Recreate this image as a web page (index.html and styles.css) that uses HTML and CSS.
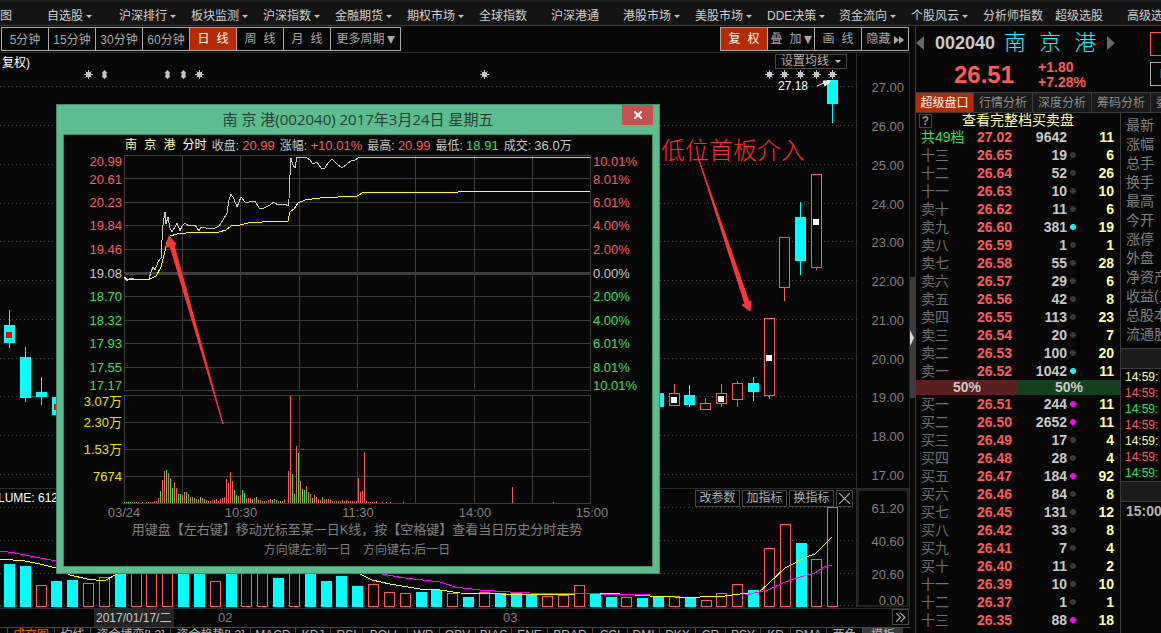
FILE: index.html
```html
<!DOCTYPE html>
<html lang="zh-CN">
<head>
<meta charset="utf-8">
<title>南京港 002040</title>
<link rel="stylesheet" href="styles.css">
</head>
<body>
<nav class="menu">
  <a href="#" class="first">图</a><a href="#" class="drop">自选股</a><a href="#" class="drop">沪深排行</a><a href="#" class="drop">板块监测</a><a href="#" class="drop">沪深指数</a><a href="#" class="drop">金融期货</a><a href="#" class="drop">期权市场</a><a href="#">全球指数</a><a href="#">沪深港通</a><a href="#" class="drop">港股市场</a><a href="#" class="drop">美股市场</a><a href="#" class="drop">DDE决策</a><a href="#" class="drop">资金流向</a><a href="#" class="drop">个股风云</a><a href="#">分析师指数</a><a href="#">超级选股</a><a href="#">高级选股</a>
</nav>
<div class="work">
  <main class="left">
    <div class="toolbar">
      <div class="group">
        <button>5分钟</button><button>15分钟</button><button>30分钟</button><button>60分钟</button><button class="on">日 线</button><button>周 线</button><button>月 线</button><button class="wide">更多周期<svg class="tri" viewBox="0 0 8 8"><path d="M0 0h8L4 8z"/></svg></button>
      </div>
      <div class="group">
        <button class="on">复 权</button><button>叠 加<svg class="tri" viewBox="0 0 8 8"><path d="M0 0h8L4 8z"/></svg></button><button>画 线</button><button>隐藏<svg class="fwd" viewBox="0 0 10 8"><path d="M0 0l5 4-5 4zM5 0l5 4-5 4z"/></svg></button>
      </div>
    </div>
    <div class="chart">
      <svg id="kline" class="plot" viewBox="0 52 910 557">
        <path class="frame" d="M0 52.5H910M856.5 52V607M0 488.5H910M909.5 52V609M0 608.5H910"/>
        <path class="frame thick" d="M857 490H908V606H858V490"/>
        <g id="kgrid"></g>
        <g id="kbars"></g>
        <polyline class="ma5" points="0,559 25,561 40,564 56,568 70,575 87,579 104,581 117,574 130,560"/>
        <polyline class="ma5" points="350,570 360,574 372,580 390,584 420,589 440,590 460,593 500,594 560,595 575,594 600,593 620,594 650,596 675,597 700,597 725,596 740,594 755,593 759,592 768,584 785,568 795,563 803,558 815,554 822,547 832,537"/>
        <polyline class="ma10" points="0,551 15,553 35,557 56,561"/>
        <polyline class="ma10" points="370,572 382,574 405,578 440,582 455,587 480,590 510,592 530,593 600,594 650,595 745,595 768,590 785,582 800,577 815,573 824,567 832,565"/>
        <text class="lbl white" x="2" y="67">复权)</text>
        <text class="lbl white" x="-2" y="502">LUME: 612</text>
        <text class="lbl white" x="778" y="90">27.18</text>
        <path class="pointer" d="M817 86l7-3M823 81l8 0-6 5z"/>
        <g id="marks"></g>
        <text class="note" x="661" y="159">低位首板介入</text>
        <path class="arrow" d="M698 157L745 304 742 305 750 311 751 301 749 302z"/>
      </svg>
      <button class="mini avg">设置均线<i class="caret"></i></button>
      <div class="tools">
        <button class="mini">改参数</button><button class="mini">加指标</button><button class="mini">换指标</button><button class="mini sq" aria-label="关闭"><svg viewBox="0 0 10 10"><path d="M0 0l10 10M10 0L0 10"/></svg></button>
      </div>
    </div>
    <div class="dates">
      <span class="cur">2017/01/17/二</span><span class="m2">02</span><span class="m3">03</span>
      <button class="mini sq more" aria-label="更多"><svg viewBox="0 0 10 10"><path d="M1 1l4 4-4 4M5 1l4 4-4 4"/></svg></button>
    </div>
    <div class="tabs">
      <a href="#" class="w47 hot">成交图</a><a href="#" class="w36">均线</a><a href="#" class="w80">资金博弈[L2]</a><a href="#" class="w80">资金趋势[L2]</a><a href="#" class="w45">MACD</a><a href="#" class="w35">KDJ</a><a href="#" class="w32">RSI</a><a href="#" class="w45">BOLL</a><a href="#" class="w32">WR</a><a href="#" class="w36">OBV</a><a href="#" class="w36">BIAS</a><a href="#" class="w36">ENE</a><a href="#" class="w45">BRAR</a><a href="#" class="w35">CCI</a><a href="#" class="w32">DMI</a><a href="#" class="w36">DKX</a><a href="#" class="w30">CR</a><a href="#" class="w35">PSY</a><a href="#" class="w30">KD</a><a href="#" class="w36">DMA</a><a href="#" class="w36">两色</a><a href="#" class="w41 pick">模板</a>
    </div>
  </main>
  <div class="splitter"><div class="thumb"><svg viewBox="0 0 5 20"><path d="M0 0l5 10-5 10z"/></svg></div></div>
  <aside class="right">
    <header class="quote">
      <div class="name">
        <svg class="step" viewBox="0 0 8 14"><path d="M8 0v14L0 7z"/></svg>
        <b>002040</b><span class="cn">南 京 港</span>
        <svg class="step" viewBox="0 0 8 14"><path d="M0 0v14l8-7z"/></svg>
      </div>
      <div class="price"><strong>26.51</strong><div class="chg"><span>+1.80</span><span>+7.28%</span></div></div>
      <div class="side-btns"><button class="buy" aria-label="买"></button><button aria-label="L">L</button></div>
    </header>
    <div class="rtabs"><button class="on">超级盘口</button><button>行情分析</button><button>深度分析</button><button>筹码分析</button><button>委托分析</button></div>
    <div class="cols">
      <section class="book">
        <div class="bookhead"><button class="help">?</button><a href="#">查看完整档买卖盘</a></div>
        <table id="asks"></table>
        <div class="ratio"><span>50%</span><span>50%</span></div>
        <table id="bids"></table>
      </section>
      <section class="info">
        <ul class="facts"><li>最新</li><li>涨幅</li><li>总手</li><li>换手</li><li>最高</li><li>今开</li><li>涨停</li><li>外盘</li><li>净资产</li><li>收益(三)</li><li>总股本</li><li>流通股</li></ul>
        <div class="band"></div>
        <ul class="ticks"><li class="y">14:59:</li><li class="r">14:59:</li><li class="g">14:59:</li><li class="r">14:59:</li><li class="y">14:59:</li><li class="r">14:59:</li><li class="g">14:59:</li></ul>
        <div class="band"></div>
        <b class="clock">15:00</b>
      </section>
    </div>
  </aside>
</div>

<div class="dialog" role="dialog" aria-labelledby="dlg-title">
  <div class="titlebar"><h1 id="dlg-title">南 京 港(002040) 2017年3月24日 星期五</h1>
    <button class="close" aria-label="关闭"><svg viewBox="0 0 8 8"><path d="M0 0l8 8M8 0L0 8"/></svg></button></div>
  <div class="pane">
    <div class="stats">
      <span class="nm">南 京 港 <em>分时</em></span>
      <span>收盘: <b class="r">20.99</b></span><span>涨幅: <b class="r">+10.01%</b></span><span>最高: <b class="r">20.99</b></span><span>最低: <b class="g">18.91</b></span><span>成交: <b>36.0</b>万</span>
    </div>
    <svg id="intraday" class="plot" viewBox="64 154 588 366">
      <g id="igrid"></g>
      <g id="ivol"></g>
      <polyline class="tick" points="124,277 127,281 131,278 134,279 149,279 151,272 153,267 155,270 158,262 161,258 162,240 163,225 165,212 166,224 168,217 170,228 172,232 175,227 177,223 180,231 182,226 185,223 189,226 195,225 199,231 201,227 206,228 213,229 219,226 223,220 227,213 229,200 231,194 234,199 237,207 241,197 245,202 249,202 255,201 259,208 264,208 270,205 274,202 278,205 285,204 288,206 289,199 290,175 291,158 293,165 295,168 297,157 306,157 310,160 313,164 317,162 321,168 325,168 328,163 332,159 337,164 342,168 347,164 351,161 355,160 360,157 590,157"/>
      <polyline class="ma5" points="124,277 128,280 134,279 150,279 156,276 161,267 164,255 167,242 170,236 177,234 195,232 219,232 226,230 231,226 240,225 248,223 262,222 288,221 290,212 294,209 298,203 305,200 320,198 357,196 364,192 458,192 459,191 590,191"/>
      <path class="arrow" d="M223 424L170 246 166 247 169 236 176 244 174 245z"/>
    </svg>
    <p class="hint big">用键盘【左右键】移动光标至某一日K线，按【空格键】查看当日历史分时走势</p>
    <p class="hint">方向键左:前一日　方向键右:后一日</p>
  </div>
</div>
<script src="app.js"></script>
</body>
</html>
```
FILE: styles.css
```css
* { box-sizing: border-box; margin: 0; padding: 0; }
html { height: 100%; }
body {
  height: 100vh; overflow: hidden; position: relative;
  display: flex; flex-direction: column;
  background: #070707; color: #b4b4b4;
  font: 12px/16px "Liberation Sans", "Noto Sans CJK SC", sans-serif;
}
a { color: inherit; text-decoration: none; }
ul { list-style: none; }
button { font: inherit; color: inherit; background: none; border: 0; white-space: nowrap; }
svg { display: block; }

.menu {
  display: flex; height: 26px; flex: none; overflow: hidden;
  border-top: 2px solid #222; border-bottom: 1px solid #3c3c3c;
  background: #141414; color: #d0d0d0; line-height: 28px;
}
.menu a { flex: 0 0 72px; white-space: nowrap; }
.menu .first { flex-basis: 47px; }
.menu .drop::after, .caret {
  content: ""; display: inline-block; vertical-align: middle; margin-left: 3px;
  border: 3px solid transparent; border-top-color: #c8c8c8; border-bottom: 0;
}
.work { display: flex; flex: 1; min-height: 0; }
.left { flex: 1; min-width: 0; }

.toolbar { display: flex; justify-content: space-between; padding: 1px 1px; }
.group { display: flex; border: 1px solid #aaa; border-right: 0; }
.group button {
  width: 47px; height: 22px; border-right: 1px solid #aaa; padding-top: 1px;
  font-family: "Liberation Mono", "Noto Sans CJK SC", monospace; color: #a8a8a8;
  display: flex; align-items: center; justify-content: center;
}
.group button:nth-child(-n+4) { font-family: "Liberation Sans", "Noto Sans CJK SC", sans-serif; }
.group + .group button { font-family: "Liberation Mono", "Noto Sans CJK SC", monospace; }
.group .wide { width: 70px; }
.group .on { background: #b52b00; color: #fff; }
.tri { width: 8px; height: 8px; margin-left: 2px; fill: #a8a8a8; }
.fwd { width: 10px; height: 8px; margin-left: 3px; fill: #a8a8a8; }

.chart { position: relative; }
.plot { width: 100%; }
.frame { fill: none; stroke: #2c2c2c; }
.thick { stroke-width: 2; stroke: #222; }
.dot { stroke: #484848; stroke-dasharray: 1 3; fill: none; }
.lbl { font-size: 13px; fill: #808080; }
.white { font-size: 12px; fill: #fff; }
.end { text-anchor: end; }
.mid { text-anchor: middle; }
.red { fill: #ff5a5a; }
.green { fill: #32e05a; }
.yellow { fill: #e6e600; }
.gray { fill: #c8c8c8; }
rect, polyline { shape-rendering: crispEdges; }
.ma5 { fill: none; stroke: #ff0; }
.ma10 { fill: none; stroke: #f0f; }
.tick { fill: none; stroke: #c8c8c8; }
.down { fill: #0ff; }
.up { fill: #070707; stroke: #ff5a5a; }
.wick-down { stroke: #0ff; }
.wick-up { stroke: #ff5a5a; }
.sell { fill: #f00; }
.hold { fill: #fff; }
.star { stroke: #c8c8c8; fill: #c8c8c8; }
.updown { fill: #c8c8c8; }
.pointer { stroke: #fff; fill: #fff; }
.note { font-family: "Noto Sans CJK SC", sans-serif; font-weight: 300; font-size: 24px; fill: #ff2a2a; }
.arrow { fill: #ff3535; stroke: #ff3535; }
.grid { stroke: #3e3e3e; fill: none; }
.zero { stroke: #3e3e3e; stroke-width: 3; }

.mini { border: 1px solid #484848; background: #070707; color: #b0b0b0; height: 17px; line-height: 15px; padding: 0 3px; }
.sq { width: 17px; padding: 2px; }
.sq svg { fill: none; stroke: #b0b0b0; }
.avg { position: absolute; right: 63px; top: 2px; height: 15px; width: 72px; line-height: 13px; white-space: nowrap; }
.avg .caret { margin-left: 6px; }
.tools { position: absolute; right: 57px; bottom: 102px; display: flex; gap: 2px; }
.tools .mini:not(.sq) { width: 45px; }

.dates { position: relative; display: flex; height: 18px; line-height: 18px; font-size: 13px; color: #808080; padding-left: 94px; }
.cur { width: 80px; background: #242424; color: #c8c8c8; padding-left: 2px; font-size: 12px; white-space: nowrap; }
.m2 { margin-left: 44px; width: 285px; }
.more { margin-left: auto; margin-right: 1px; height: 16px; }

.tabs { display: flex; border-top: 1px solid #484848; padding-left: 7px; height: 18px; overflow: hidden; line-height: 15px; }
.tabs a { flex: none; border-left: 1px solid #484848; text-align: center; overflow: hidden; white-space: nowrap; }
.w30 { width: 30px; } .w32 { width: 32px; } .w35 { width: 35px; } .w36 { width: 36px; } .w41 { width: 41px; }
.w45 { width: 45px; } .w47 { width: 47px; } .w80 { width: 80px; }
.hot { color: #ff5a00; }
.pick { background: #3a3a3a; }

.splitter { width: 6px; flex: none; border-right: 1px solid #3c3c3c; padding-top: 251px; }
.thumb { background: #3c3c3c; height: 121px; padding-top: 51px; }
.thumb svg { width: 4px; height: 20px; fill: #ddd; }

.right { flex: 0 0 245px; min-width: 0; overflow: hidden; display: flex; flex-direction: column; }
.quote { position: relative; height: 67px; flex: none; border-bottom: 1px solid #3c3c3c; }
.name { display: flex; align-items: center; height: 34px; gap: 9px; }
.name b { font-size: 18px; color: #c8c8c8; margin-left: 2px; }
.cn { font: 300 22px/30px "Liberation Mono", "Noto Sans CJK SC", monospace; color: #0ff; white-space: nowrap; padding-top: 4px; margin-right: 2px; }
.step { width: 8px; height: 14px; fill: #686868; }
.price { display: flex; padding-left: 38px; gap: 24px; color: #ff5a5a; line-height: 30px; }
.price strong { font-size: 24px; }
.chg { display: flex; flex-direction: column; font: bold 14px/15px "Liberation Sans", sans-serif; }
.side-btns { position: absolute; left: 234px; top: 6px; display: grid; gap: 6px; }
.side-btns button { width: 40px; height: 24px; border: 1px solid #aaa; text-align: left; padding-left: 9px; font-weight: bold; }
.side-btns .buy { border-color: #ff5a5a; }
.rtabs { display: flex; height: 20px; flex: none; border-bottom: 1px solid #3c3c3c; }
.rtabs button { flex: 0 0 59px; border-right: 1px solid #3c3c3c; background: #1a1a1a; color: #909090; }
.rtabs .on { background: #b52b00; color: #fff; flex-basis: 58px; }
.cols { display: flex; flex: 1; min-height: 0; }
.book { flex: 0 0 205px; border-right: 1px solid #3c3c3c; }
.bookhead { display: flex; align-items: center; height: 15px; padding-left: 3px; gap: 30px; color: #ffffa0; font-size: 14px; line-height: 15px; }
.help { border: 1px solid #484848; width: 13px; height: 14px; line-height: 12px; color: #909090; font-weight: bold; font-size: 12px; }
table { width: 100%; border-collapse: collapse; table-layout: fixed; }
td, th { height: 18px; font-size: 14px; line-height: 18px; font-weight: bold; text-align: right; white-space: nowrap; overflow: hidden; }
th { width: 50px; font-weight: normal; text-align: left; padding-left: 5px; color: #707070; }
.total th { color: #32e05a; }
.c-price { width: 46px; color: #ff5a5a; }
.c-vol { width: 55px; color: #c8c8c8; }
.c-dot { width: 12px; }
.c-dot svg { width: 6px; height: 6px; margin-left: 3px; fill: #383838; }
.c-dot .cyan { fill: #0ff; }
.c-dot .pink { fill: #f0f; }
.c-num { color: #ffffa0; padding-right: 6px; }
.ratio { display: flex; font: bold 14px/15px "Liberation Sans", sans-serif; color: #c8c8c8; text-align: center; }
.ratio span { flex: 1; background: #5a2020; }
.ratio span + span { background: #14401e; }
.info { flex: 1; min-width: 0; overflow: hidden; white-space: nowrap; }
.facts { padding: 3px 0 4px 5px; font-size: 14px; line-height: 19px; color: #808080; }
.band { height: 21px; background: #1a1a1a; border: solid #3c3c3c; border-width: 1px 0; }
.ticks { padding-left: 4px; line-height: 16px; }
.clock { display: block; font-size: 14px; line-height: 18px; padding-left: 5px; color: #b4b4b4; }
.y { color: #ffffa0; } .r { color: #ff5a5a; } .g { color: #32e05a; }

.dialog {
  position: absolute; left: 56px; top: 104px; width: 604px;
  background: #5cbd8e; border: 1px solid #418c68; padding: 0 7px 7px;
}
.titlebar { position: relative; height: 30px; }
h1 { font: 15px/29px "Open Sans", "Noto Sans CJK SC", sans-serif; color: #2a3c33; text-align: center; }
.close { position: absolute; right: -1px; top: 0; width: 31px; height: 20px; background: #c75050; display: grid; place-items: center; }
.close svg { width: 8px; height: 8px; stroke: #fff; stroke-width: 2; }
.pane { background: #070707; outline: 1px solid #418c68; height: 431px; }
.stats { display: flex; gap: 5px; padding: 2px 0 0 61px; height: 19px; line-height: 18px; white-space: nowrap; color: #c8c8c8; }
.stats b { font-weight: normal; font-size: 13px; }
.stats .nm { font-family: "Liberation Mono", "Noto Sans CJK SC", monospace; color: #ffffa0; }
.stats em { font-style: normal; color: #fff; }
.hint { text-align: center; color: #808080; line-height: 20px; padding-right: 2px; }
.big { font-size: 13px; }
```
FILE: app.js
```js
const NS = 'http://www.w3.org/2000/svg';
function add(parent, tag, attrs, text) {
  const node = document.createElementNS(NS, tag);
  for (const key in attrs) node.setAttribute(key, attrs[key]);
  if (text) node.textContent = text;
  parent.appendChild(node);
}
const $ = id => document.getElementById(id);

// daily chart: price and volume scales
[87, 126, 165, 204, 242, 281, 320, 359, 397, 436, 475].forEach((y, i) => {
  add($('kgrid'), 'path', { class: 'dot', d: `M0 ${y - .5}H860` });
  add($('kgrid'), 'text', { class: 'lbl end', x: 904, y: y + 5 }, (27 - i).toFixed(2));
});
[[508, '61.20'], [541, '40.60'], [574, '20.60'], [606, '0.00']].forEach(([y, t]) => {
  add($('kgrid'), 'path', { class: 'dot', d: `M0 ${y - .5}H860` });
  add($('kgrid'), 'text', { class: 'lbl end', x: 904, y: t === '0.00' ? 605 : y + 5 }, t);
});

// volume bars: d = falling day, u = rising day, number = top edge
const volumes = 'd564 d566 u585 d581 d580 u583 u577 d565 u560 u560 u560 d560 d560 u581 d565 u560 u565 d578 u570 d565 d581 d576 d586 u584 u592 u593 d592 d590 u593 d597 u592 d593 d593 d594 u596 u595 u585 d593 d597 u597 d598 d596 u596 d597 u600 u593 u584 d590 u548 u524 d543 u559 u507'.split(' ');
const box = (x, top, bottom, up) => up
  ? add($('kbars'), 'rect', { class: 'up', x: x + .5, y: top + .5, width: 10, height: bottom - top - 1 })
  : add($('kbars'), 'rect', { class: 'down', x, y: top, width: 11, height: bottom - top });
volumes.forEach((v, i) => box(Math.round(4 + i * 15.83), +v.slice(1), 607, v[0] === 'u'));

// candles: x, high, body top, body bottom, low, rising, marker class, marker y
[[4, 310, 325, 343, 348, 0, 'sell', 332], [20, 347, 357, 398, 402, 0], [36, 377, 392, 397, 405, 0], [52, 397, 397, 415, 415, 0, 'sell', 404],
 [653, 393, 393, 407, 407, 0], [669, 384, 393, 406, 406, 1, 'hold', 397], [684, 385, 395, 405, 407, 0], [700, 398, 403, 410, 410, 1],
 [716, 384, 393, 404, 407, 1, 'hold', 396], [732, 381, 383, 400, 407, 1], [748, 377, 383, 392, 401, 0], [764, 318, 318, 396, 399, 1, 'hold', 355],
 [779, 237, 237, 288, 301, 1], [795, 202, 217, 261, 275, 0], [811, 174, 174, 268, 270, 1, 'hold', 219], [827, 80, 80, 104, 123, 0]
].forEach(([x, hi, top, bot, lo, up, mark, my]) => {
  add($('kbars'), 'path', { class: up ? 'wick-up' : 'wick-down', d: `M${x + 5.5} ${hi}V${lo}` });
  box(x, top, bot, up);
  if (mark) add($('kbars'), 'rect', { class: mark, x: x + 2, y: my, width: 6, height: 6 });
});

[88, 199, 484, 769, 784, 800, 816, 832].forEach(x =>
  add($('marks'), 'path', { class: 'star', d: `M${x - 4} 74.5h9M${x + .5} 70v9M${x - 2.5} 71.5l6 6M${x + 3.5} 71.5l-6 6M${x - 1.5} 72.5h4v4h-4z` }));
[104, 167, 183].forEach(x =>
  add($('marks'), 'path', { class: 'updown', d: `M${x - 2.5} 73l3-3 3 3h-1v3h1l-3 3-3-3h1v-3z` }));

// intraday chart
const ig = $('igrid');
add(ig, 'path', { class: 'grid', d: 'M124 155.5H590M124 178.5H590M124 202.5H590M124 225.5H590M124 249.5H590M124 296.5H590M124 320.5H590M124 343.5H590M124 367.5H590M124 390.5H590M124 395.5H590M124 422.5H590M124 449.5H590M124 476.5H590M124 503.5H590' });
[124, 182, 240, 299, 357, 415, 474, 532, 590].forEach(x =>
  add(ig, 'path', { class: 'grid', d: `M${x + .5} 155V391M${x + .5} 395V504` }));
add(ig, 'path', { class: 'zero', d: 'M124 273.5H590' });
[[161, '20.99', '10.01%'], [179, '20.61', '8.01%'], [202, '20.23', '6.01%'], [225, '19.84', '4.00%'], [249, '19.46', '2.00%'], [273, '19.08', '0.00%'],
 [296, '18.70', '2.00%'], [320, '18.32', '4.00%'], [343, '17.93', '6.01%'], [367, '17.55', '8.01%'], [385, '17.17', '10.01%']
].forEach(([y, l, r]) => {
  const tone = y < 273 ? 'red' : y > 273 ? 'green' : 'gray';
  add(ig, 'text', { class: 'lbl end ' + tone, x: 122, y: y + 5 }, l);
  add(ig, 'text', { class: 'lbl ' + tone, x: 593, y: y + 5 }, r);
});
[[401, '3.07万'], [422, '2.30万'], [449, '1.53万'], [476, '7674']].forEach(([y, t]) =>
  add(ig, 'text', { class: 'lbl end yellow', x: 122, y: y + 5 }, t));
[[124, '03/24'], [241, '10:30'], [358, '11:30'], [475, '14:00'], [592, '15:00']].forEach(([x, t]) =>
  add(ig, 'text', { class: 'lbl mid', x, y: 517 }, t));

// minute volume: start x, then heights two pixels apart (negative = falling minute)
const minutes = {
  124: [-1, -1, -1, -1, 1, -1, 1, 1, 0, -1, 0, 1, 1, -1, 1, 2, 2, 5, -12, 23, 32, -33, 30, -25, -15, 21, 15, -9, -9, 8, 11, -11, 9, -6, 6, -5, 4, 4, -6, 5, -4, 3, -2, 2, 3, 3, 4, 2, 4, 5, 6, 24, 20, 31, 22, -13, -8, 7, 8, -13, -10, 5, 5, 5, -4, 5, -6, 3, 3, -2, -2, 2, 3, 4, -3, 4, -3, 2, -2, 2, 4],
  288: [32, 107, -29, -9, 57, -50, 22, -14, -13, 17, -11, 9, -5, 8, 6, 4, 3, -6, 4, 4, 4, 3, -2, 2, 2, -2, 2, 3, 2, 3, 2, 2, 2, 2, 2, 25, 11, 12, 51, 2, 1, 1, 1, 1, 2, 0, 0, 1, 0, 1, 0, 1],
  403: [1], 512: [16], 553: [1]
};
for (const start in minutes) minutes[start].forEach((h, i) => {
  if (h) add($('ivol'), 'rect', { class: h > 0 ? 'red' : 'green', x: +start + i * 2, y: 503 - Math.abs(h), width: 1, height: Math.abs(h) });
});

// order book: label, price, volume, count, dot colour
const asks = `共49档 27.02 9642 11 none
十三 26.65 19 6
十二 26.64 52 26
十一 26.63 10 10
卖十 26.62 11 6
卖九 26.60 381 19 cyan
卖八 26.59 1 1
卖七 26.58 55 28
卖六 26.57 29 6
卖五 26.56 42 8
卖四 26.55 113 23
卖三 26.54 20 7
卖二 26.53 100 20
卖一 26.52 1042 11 cyan`;
const bids = `买一 26.51 244 11 pink
买二 26.50 2652 11 pink
买三 26.49 17 4
买四 26.48 28 4
买五 26.47 184 92 pink
买六 26.46 84 8
买七 26.45 131 12
买八 26.42 33 8
买九 26.41 7 4
买十 26.40 11 2
十一 26.39 10 10
十二 26.37 1 1
十三 26.35 88 18 pink`;
const row = line => {
  const [name, price, vol, num, dot = ''] = line.split(' ');
  const mark = dot === 'none' ? '' : `<svg class="${dot}" viewBox="0 0 6 6"><path d="M2 0h2l2 2v2L4 6H2L0 4V2z"/></svg>`;
  return `<tr${dot === 'none' ? ' class="total"' : ''}><th scope="row">${name}</th><td class="c-price">${price}</td><td class="c-vol">${vol}</td><td class="c-dot">${mark}</td><td class="c-num">${num}</td></tr>`;
};
$('asks').innerHTML = asks.split('\n').map(row).join('');
$('bids').innerHTML = bids.split('\n').map(row).join('');
```
